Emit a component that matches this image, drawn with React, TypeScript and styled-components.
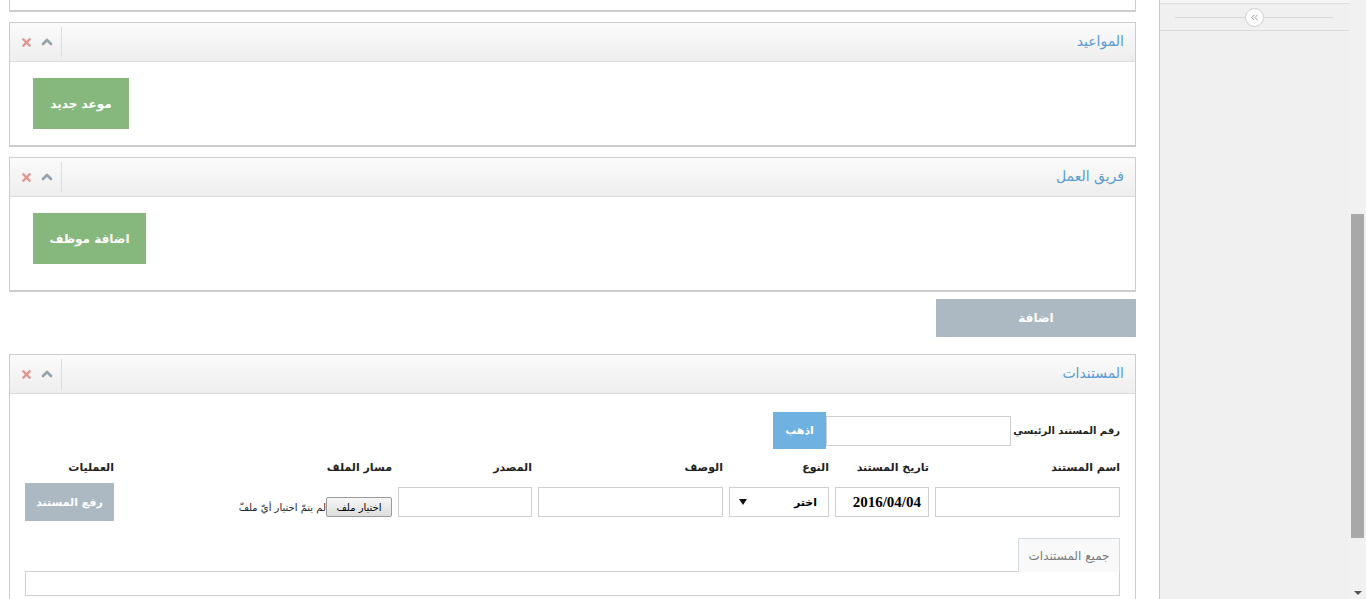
import React from "react";
import styled, { createGlobalStyle } from "styled-components";
import { X, ChevronUp, ChevronsLeft } from "lucide-react";

const GlobalStyle = createGlobalStyle`
  html, body {
    margin: 0;
    padding: 0;
    background: #fff;
    overflow: hidden;
  }
  body {
    font-family: "DejaVu Sans", "Liberation Sans", sans-serif;
    color: #222;
  }
  * { box-sizing: border-box; }
`;

const Page = styled.div`
  display: flex;
  width: 1366px;
  height: 599px;
  overflow: hidden;
`;

const Main = styled.main`
  width: 1159px;
  flex-shrink: 0;
  padding: 0 23px 0 9px;
  display: flex;
  flex-direction: column;
  direction: rtl;
  & > * {
    flex-shrink: 0;
  }
`;

const PanelStub = styled.div`
  height: 12px;
  border: 1px solid #cdcdcd;
  border-top: none;
  border-bottom-width: 2px;
`;

const Panel = styled.section<{ $top: number }>`
  margin-top: ${(p) => p.$top}px;
  border: 1px solid #cdcdcd;
  border-bottom-width: 2px;
  background: #fff;
`;

const PanelHeader = styled.header`
  height: 39px;
  display: flex;
  align-items: center;
  background: linear-gradient(to bottom, #fbfbfb, #eeeeee);
  border-bottom: 1px solid #dcdcdc;
`;

const PanelTitle = styled.h3`
  margin: 0 0 3px 0;
  padding-right: 11px;
  font-size: 14px;
  font-weight: normal;
  color: #5b9bd1;
`;

const Tools = styled.div`
  margin-right: auto;
  direction: ltr;
  display: flex;
  align-items: center;
  gap: 6px;
  height: 30px;
  width: 52px;
  padding-left: 10px;
  border-right: 1px solid #dcdcdc;
`;

const PanelBody = styled.div<{ $pb: number }>`
  display: flex;
  justify-content: flex-end;
  padding: 16px 23px ${(p) => p.$pb}px 23px;
`;

const GreenButton = styled.button<{ $w: number }>`
  width: ${(p) => p.$w}px;
  height: 51px;
  border: none;
  background: #86b87d;
  color: #fff;
  font-family: inherit;
  font-size: 12px;
  font-weight: bold;
`;

const AddBar = styled.button`
  align-self: flex-start;
  margin-top: 7px;
  width: 200px;
  height: 38px;
  border: none;
  background: #adb9c2;
  color: #fff;
  font-family: inherit;
  font-size: 12px;
  font-weight: bold;
`;

const DocsBody = styled.div`
  padding: 18px 15px 20px 15px;
`;

const MainRow = styled.div`
  display: flex;
  align-items: center;
`;

const RowLabel = styled.label`
  flex: 0 0 109px;
  min-width: 0;
  padding-left: 6px;
  font-size: 10px;
  font-weight: bold;
  white-space: nowrap;
`;

const TextBox = styled.div<{ $w?: number }>`
  width: ${(p) => (p.$w ? `${p.$w}px` : "100%")};
  flex-shrink: 0;
  height: 30px;
  border: 1px solid #cfcfcf;
  background: #fff;
`;

const GoButton = styled.button`
  width: 53px;
  height: 37px;
  border: none;
  background: #6fb1e0;
  color: #fff;
  font-family: inherit;
  font-size: 11px;
  font-weight: bold;
`;

const DocGrid = styled.div`
  margin-top: 10px;
  display: grid;
  grid-template-columns: 185px 94px 100px 185px 134px 1fr 89px;
  grid-template-rows: 16px 38px;
  column-gap: 6px;
  row-gap: 8px;
  align-items: center;
`;

const ColLabel = styled.div`
  font-size: 11px;
  font-weight: bold;
  white-space: nowrap;
`;

const DateBox = styled.div`
  height: 30px;
  border: 1px solid #cfcfcf;
  display: flex;
  align-items: center;
  padding-right: 7px;
  font-family: "Liberation Serif", serif;
  font-size: 15px;
  font-weight: bold;
  color: #000;
`;

const SelectBox = styled.div`
  height: 30px;
  border: 1px solid #cfcfcf;
  display: flex;
  align-items: center;
  justify-content: space-between;
  padding: 0 11px 0 9px;
  font-size: 11px;
  font-weight: bold;
  color: #000;
`;

const Caret = styled.span`
  width: 0;
  height: 0;
  border-left: 4px solid transparent;
  border-right: 4px solid transparent;
  border-top: 6px solid #111;
`;

const FileCell = styled.div`
  display: flex;
  align-items: center;
  padding-top: 10px;
  font-size: 10px;
  color: #222;
  white-space: nowrap;
`;

const FileButton = styled.span`
  height: 20px;
  width: 66px;
  display: inline-flex;
  align-items: center;
  justify-content: center;
  border: 1px solid #9a9a9a;
  border-radius: 2px;
  background: linear-gradient(to bottom, #f7f7f7, #dddddd);
  font-size: 10px;
  color: #000;
`;

const GrayButton = styled.button`
  width: 89px;
  height: 38px;
  border: none;
  background: #adb9c2;
  color: #fff;
  font-family: inherit;
  font-size: 11px;
  font-weight: bold;
`;

const TabRow = styled.div`
  margin-top: 17px;
  display: flex;
`;

const Tab = styled.div`
  width: 102px;
  height: 34px;
  margin-bottom: -1px;
  display: flex;
  align-items: center;
  justify-content: center;
  border: 1px solid #d3dbe1;
  border-bottom: none;
  background: #f9f9f9;
  color: #7a7a7a;
  font-size: 12px;
`;

const TabContent = styled.div`
  height: 25px;
  border: 1px solid #cfcfcf;
`;

const Sidebar = styled.aside`
  width: 190px;
  flex-shrink: 0;
  border-left: 1px solid #cacaca;
  background: #f0f0f0;
`;

const SideTop = styled.div`
  height: 4px;
  background: #f6f6f6;
  border-bottom: 1px solid #dcdcdc;
`;

const Toggler = styled.div`
  height: 27px;
  padding: 0 16px 0 15px;
  display: flex;
  align-items: center;
  border-bottom: 1px solid #dcdcdc;
`;

const TogglerLine = styled.span`
  flex: 1;
  height: 1px;
  background: #d8d8d8;
`;

const TogglerCircle = styled.span`
  width: 19px;
  height: 19px;
  border-radius: 50%;
  border: 1px solid #cfcfcf;
  background: #fff;
  display: flex;
  align-items: center;
  justify-content: center;
`;

const ScrollTrack = styled.div`
  width: 17px;
  flex-shrink: 0;
  background: #f1f1f1;
  display: flex;
  flex-direction: column;
  align-items: center;
`;

const ScrollThumb = styled.div`
  margin-top: 214px;
  width: 13px;
  height: 324px;
  background: #a8a8a8;
`;

const ScrollArrow = styled.span`
  margin-top: auto;
  margin-bottom: 4px;
  width: 0;
  height: 0;
  border-left: 4px solid transparent;
  border-right: 4px solid transparent;
  border-top: 4px solid #555;
`;

const PanelHead = ({ title }: { title: string }) => (
  <PanelHeader>
    <PanelTitle>{title}</PanelTitle>
    <Tools>
      <X size={13} strokeWidth={4.5} color="#e5948f" />
      <ChevronUp size={16} strokeWidth={4} color="#97a3ab" />
    </Tools>
  </PanelHeader>
);

const App = () => (
  <Page>
    <GlobalStyle />
    <Main>
      <PanelStub />

      <Panel $top={10}>
        <PanelHead title="المواعيد" />
        <PanelBody $pb={16}>
          <GreenButton $w={96}>موعد جديد</GreenButton>
        </PanelBody>
      </Panel>

      <Panel $top={10}>
        <PanelHead title="فريق العمل" />
        <PanelBody $pb={26}>
          <GreenButton $w={113}>اضافة موظف</GreenButton>
        </PanelBody>
      </Panel>

      <AddBar>اضافة</AddBar>

      <Panel $top={17}>
        <PanelHead title="المستندات" />
        <DocsBody>
          <MainRow>
            <RowLabel>رقم المستند الرئيسي</RowLabel>
            <TextBox $w={185} />
            <GoButton>اذهب</GoButton>
          </MainRow>

          <DocGrid>
            <ColLabel>اسم المستند</ColLabel>
            <ColLabel>تاريخ المستند</ColLabel>
            <ColLabel>النوع</ColLabel>
            <ColLabel>الوصف</ColLabel>
            <ColLabel>المصدر</ColLabel>
            <ColLabel>مسار الملف</ColLabel>
            <ColLabel>العمليات</ColLabel>

            <TextBox />
            <DateBox>2016/04/04</DateBox>
            <SelectBox>
              <span>اختر</span>
              <Caret />
            </SelectBox>
            <TextBox />
            <TextBox />
            <FileCell>
              <FileButton>اختيار ملف</FileButton>
              <span>لم يتمّ اختيار أيّ ملفّ</span>
            </FileCell>
            <GrayButton>رفع المستند</GrayButton>
          </DocGrid>

          <TabRow>
            <Tab>جميع المستندات</Tab>
          </TabRow>
          <TabContent />
        </DocsBody>
      </Panel>
    </Main>

    <Sidebar>
      <SideTop />
      <Toggler>
        <TogglerLine />
        <TogglerCircle>
          <ChevronsLeft size={11} strokeWidth={2} color="#8a8a8a" />
        </TogglerCircle>
        <TogglerLine />
      </Toggler>
    </Sidebar>

    <ScrollTrack>
      <ScrollThumb />
      <ScrollArrow />
    </ScrollTrack>
  </Page>
);

export default App;
